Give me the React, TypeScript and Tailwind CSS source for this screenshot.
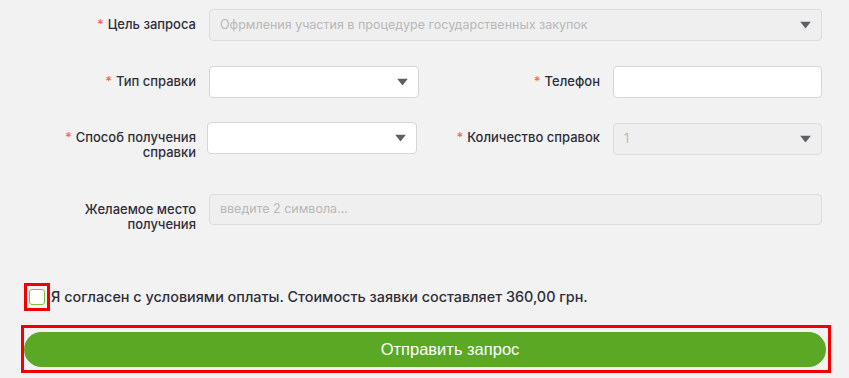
const Arrow = () => (
  <svg width="11" height="7" viewBox="0 0 11 7" className="absolute right-[10px] top-1/2 -translate-y-1/2">
    <path d="M0 0h11L5.5 7z" fill="#5f5f66" />
  </svg>
);

const Label = ({ text, required }: { text: React.ReactNode; required?: boolean }) => (
  <div className="pt-[8px] text-right text-[13px] leading-[15px] font-medium text-[#2f2f3a]">
    {required && <span className="text-[#ef6a55] mr-[4px]">*</span>}
    {text}
  </div>
);

const Select = ({ value, disabled, className = "" }: { value?: string; disabled?: boolean; className?: string }) => (
  <div
    className={`relative h-[32px] rounded-[4px] border flex items-center pl-[10px] text-[12.5px] ${
      disabled ? "bg-[#efefef] border-[#dcdcdc] text-[#b8b8b8]" : "bg-white border-[#d6d6d6] text-[#333]"
    } ${className}`}
  >
    {value}
    <Arrow />
  </div>
);

const App: React.FC = () => {
  return (
    <div className="w-[849px] h-[378px] bg-[#f2f2f2] overflow-hidden font-['Inter','Noto_Sans',sans-serif]">
      <div className="grid grid-cols-[196px_210px_168px_209px] gap-x-[13px] pt-[9px]">
        {/* row 1 */}
        <Label required text="Цель запроса" />
        <Select disabled value="Офрмления участия в процедуре государственных закупок" className="col-span-3" />

        {/* row 2 */}
        <div className="col-span-4 h-[25px]" />
        <Label required text="Тип справки" />
        <Select />
        <Label required text="Телефон" />
        <div className="h-[32px] rounded-[4px] border border-[#d6d6d6] bg-white" />

        {/* row 3 */}
        <div className="col-span-4 h-[24px]" />
        <Label
          required
          text={
            <>
              Способ получения
              <br />
              справки
            </>
          }
        />
        <Select className="-ml-[2px] mr-[2px] h-[31px]" />
        <Label required text="Количество справок" />
        <Select disabled value="1" className="mt-[1px]" />

        {/* row 4 */}
        <div className="col-span-4 h-[34px]" />
        <Label
          text={
            <>
              Желаемое место
              <br />
              получения
            </>
          }
        />
        <div className="col-span-3 h-[31px] rounded-[4px] border border-[#dcdcdc] bg-[#efefef] flex items-center pl-[10px] text-[12.5px] text-[#b8b8b8]">
          введите 2 символа...
        </div>
      </div>

      <div className="mt-[51px] ml-[24px] flex items-center gap-[1px]">
        <div className="w-[26px] h-[28px] border-[3px] border-[#f00000] flex items-center justify-center">
          <div className="w-[16px] h-[16px] rounded-[3px] border border-[#7cc242] bg-white" />
        </div>
        <span className="text-[14.4px] font-medium text-[#2f2f3a]">
          Я согласен с условиями оплаты. Стоимость заявки составляет 360,00 грн.
        </span>
      </div>

      <div className="mt-[14px] ml-[21px] w-[810px] h-[48px] border-[3px] border-[#f00000] pt-[4px] pb-[3px] pr-[2px] pl-0">
        <button className="w-full h-full rounded-full bg-[#5aa824] text-white text-[16.5px] pl-[50px] font-['Liberation_Sans',sans-serif]">
          Отправить запрос
        </button>
      </div>
    </div>
  );
};

export default App;
